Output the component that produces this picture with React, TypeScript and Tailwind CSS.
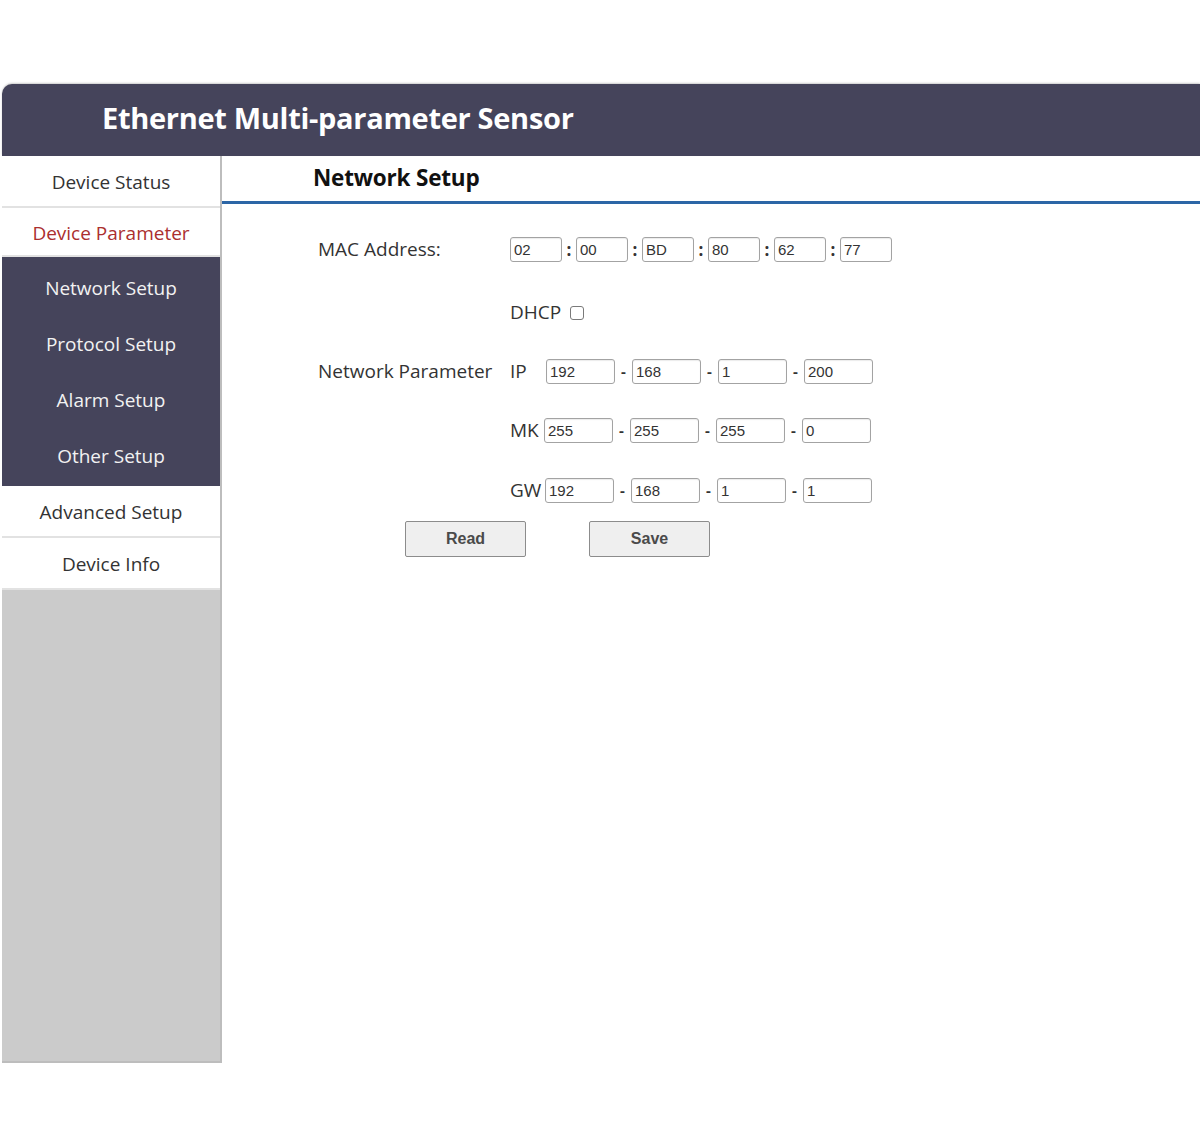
const sans = { fontFamily: '"Open Sans", "Noto Sans", sans-serif' };

const menuTop = ["Device Status", "Device Parameter"];
const subMenu = ["Network Setup", "Protocol Setup", "Alarm Setup", "Other Setup"];
const menuBottom = ["Advanced Setup", "Device Info"];

function Field({ value, w }: { value: string; w: string }) {
  return (
    <input
      readOnly
      value={value}
      className={`${w} h-[25px] rounded-[3px] border border-[#a3a3a3] bg-white pl-[3px] text-[15px] text-[#333] shadow-[inset_0_1px_1px_rgba(0,0,0,0.08)] outline-none`}
      style={{ fontFamily: '"Liberation Sans", Arial, sans-serif' }}
    />
  );
}

function IpRow({ label, values, labelW }: { label: string; values: string[]; labelW: string }) {
  return (
    <div className="flex h-[25px] items-center">
      <span className={`${labelW} text-[19px] text-[#333]`}>{label}</span>
      {values.map((v, i) => (
        <div key={i} className="flex items-center">
          {i > 0 && <span className="w-[17px] text-center text-[15px] font-bold text-[#333]">-</span>}
          <Field value={v} w="w-[69px]" />
        </div>
      ))}
    </div>
  );
}

export default function App() {
  const mac = ["02", "00", "BD", "80", "62", "77"];
  return (
    <div className="h-[1134px] w-[1200px] overflow-hidden bg-white pl-[2px] pt-[84px]" style={sans}>
      <header className="flex h-[72px] items-center rounded-tl-[10px] bg-[#45445b] pb-[5px] pl-[100px] shadow-[0_-1px_2px_rgba(0,0,0,0.2)]">
        <h1 className="text-[29px] font-bold tracking-[-0.3px] text-white">Ethernet Multi-parameter Sensor</h1>
      </header>

      <div className="flex">
        <nav className="flex h-[907px] w-[220px] flex-col border-r-2 border-b-2 border-[#bdbdbd] bg-[#cbcbcb] text-[19px]">
          {menuTop.map((m, i) => (
            <div
              key={m}
              className={`flex items-center justify-center border-b-2 border-[#e2e2e2] bg-white ${
                i === 0 ? "h-[52px] pt-[2px] text-[#333]" : "h-[49px] pt-[3px] text-[#ab2f2f]"
              }`}
            >
              {m}
            </div>
          ))}
          <div className="flex h-[229px] flex-col bg-[#45445b] pt-[3px]">
            {subMenu.map((m) => (
              <div key={m} className="flex h-[56px] items-center justify-center text-[#f2f2f2]">
                {m}
              </div>
            ))}
          </div>
          {menuBottom.map((m) => (
            <div
              key={m}
              className="flex h-[52px] items-center justify-center border-b-2 border-[#e2e2e2] bg-white pt-[3px] text-[#333]"
            >
              {m}
            </div>
          ))}
        </nav>

        <main className="flex-1">
          <div className="flex h-[48px] items-center border-b-[3px] border-[#2c66a6] pb-[2px] pl-[91px]">
            <h2 className="text-[22.5px] font-bold tracking-[-0.2px] text-[#111]">Network Setup</h2>
          </div>

          <div className="grid grid-cols-[192px_1fr] pl-[96px] pt-[33px] text-[#333]">
            <div className="flex h-[25px] items-center text-[19px]">MAC Address:</div>
            <div className="flex h-[25px] items-center">
              {mac.map((v, i) => (
                <div key={i} className="flex items-center">
                  {i > 0 && <span className="w-[14px] text-center text-[17px] font-bold text-[#333]">:</span>}
                  <Field value={v} w="w-[52px]" />
                </div>
              ))}
            </div>

            <div />
            <div className="mt-[38px] flex h-[25px] items-center gap-[9px] text-[19px]">
              <span>DHCP</span>
              <span className="h-[14px] w-[14px] rounded-[3px] border border-[#7a7a7a] bg-white" />
            </div>

            <div className="mt-[34px] flex h-[25px] items-center text-[19px]">Network Parameter</div>
            <div className="mt-[34px]">
              <IpRow label="IP" values={["192", "168", "1", "200"]} labelW="w-[36px]" />
            </div>

            <div />
            <div className="mt-[34px]">
              <IpRow label="MK" values={["255", "255", "255", "0"]} labelW="w-[34px]" />
            </div>

            <div />
            <div className="mt-[35px]">
              <IpRow label="GW" values={["192", "168", "1", "1"]} labelW="w-[35px]" />
            </div>
          </div>

          <div className="mt-[18px] flex gap-[63px] pl-[183px]">
            {["Read", "Save"].map((b) => (
              <button
                key={b}
                className="h-[36px] w-[121px] rounded-[2px] border border-[#8c8c8c] bg-[#efefef] text-[16px] font-bold text-[#4a4a4a]"
                style={{ fontFamily: '"Liberation Sans", Arial, sans-serif' }}
              >
                {b}
              </button>
            ))}
          </div>
        </main>
      </div>
    </div>
  );
}
